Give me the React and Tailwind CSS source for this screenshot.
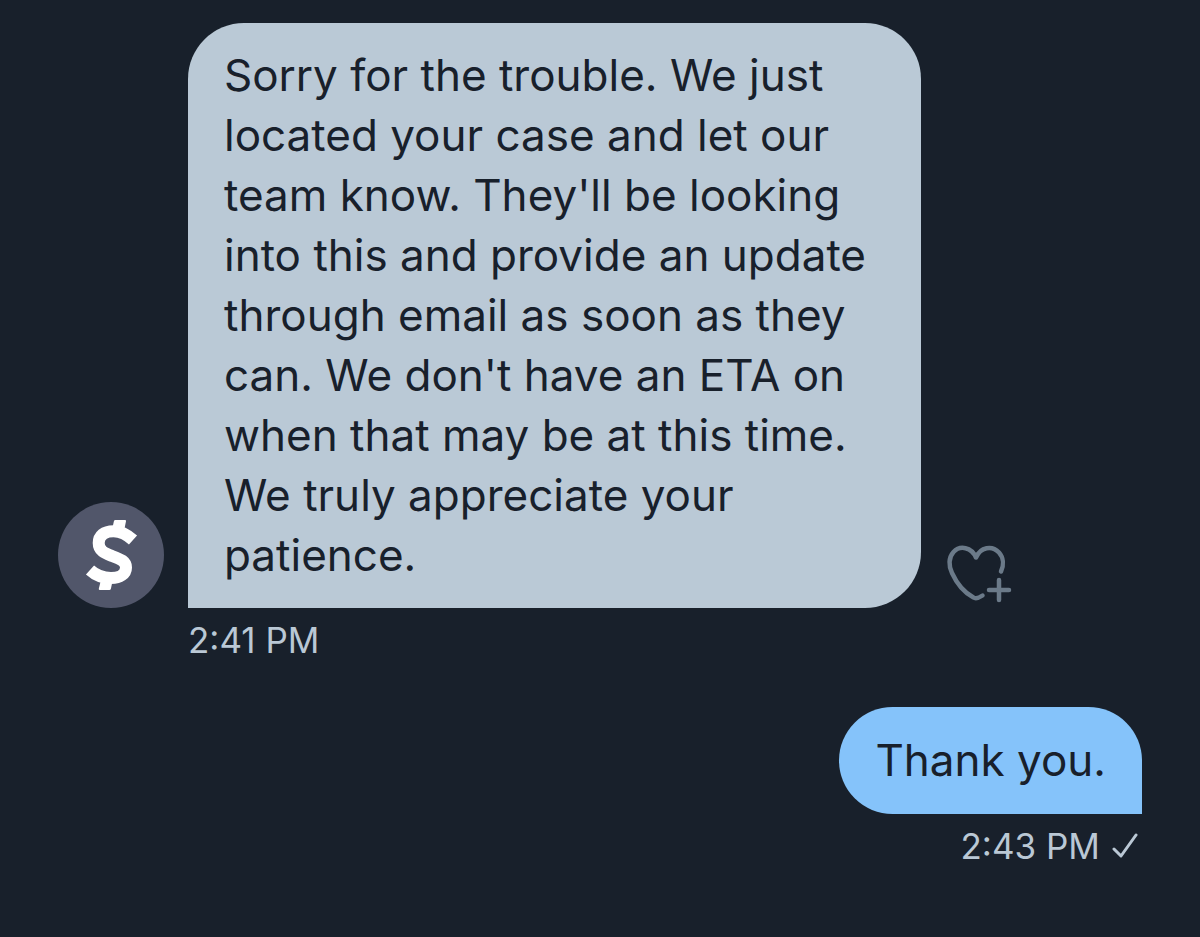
function CashAvatar() {
  return (
    <svg viewBox="0 0 106 106" className="size-[106px] shrink-0" role="img" aria-label="Cash support">
      <circle cx="53" cy="53" r="53" fill="#51566a" />
      <path
        d="M75 38C69 32.500 63 29.200 55.500 29.200C46 29.200 40.700 34 40.700 41C40.700 49 47 51.300 54 54C63 57.300 68 59.500 68 65.500C68 72 62 76 53 76C44.500 76 38 73.500 32 68"
        fill="none"
        stroke="#ffffff"
        strokeWidth="12"
        strokeLinejoin="round"
      />
      <path d="M57.300 18H67q1.300 0 1 1.300L65.800 30H53.500l2.400-10.700Q56.200 18 57.300 18zM43.200 77H55l-2.100 9.700q-.3 1.300-1.600 1.300H42q-1.500 0-1.200-1.300z" fill="#ffffff" />
    </svg>
  );
}

function HeartPlusIcon() {
  return (
    <svg viewBox="0 0 66 60" className="h-[60px] w-[66px]" fill="none" stroke="#6b7a89" strokeWidth="4.500" strokeLinecap="round" strokeLinejoin="round" aria-hidden="true">
      <path d="M55 27.500C58 21 57.500 13.500 53 8.500C46 1 34.500 3 30 13.500C25.500 3 14 1 7.500 8C2.500 13.500 2.500 22 6 29C11 40 19 49 27.500 53.500Q30.500 55.500 36.500 51.500" />
      <path d="M53 36v20M43 46h20" />
    </svg>
  );
}

function CheckIcon() {
  return (
    <svg viewBox="0 0 26 26" className="size-[26px]" fill="none" stroke="#bac8d5" strokeWidth="3" strokeLinecap="round" strokeLinejoin="round" role="img" aria-label="Sent">
      <path d="M2 16l7 7L24 2" />
    </svg>
  );
}

export default function App() {
  return (
    <main className="flex min-h-screen flex-col gap-[43px] bg-[#18202b] px-[58px] pt-[23px] font-['Inter','Liberation_Sans',sans-serif] text-[#18202b]">
      <article>
        <div className="flex items-end">
          <CashAvatar />
          <p className="ml-6 w-[733px] rounded-[56px] rounded-bl-none bg-[#bac9d6] pt-[22px] pr-4 pb-[23px] pl-9 text-[44px] leading-[60px]">
            Sorry for the trouble. We just located your case and let our team know. They'll be looking into this and provide an update through email as soon as they can. We don't have an ETA on when that may be at this time. We truly appreciate your patience.
          </p>
          <button type="button" aria-label="Add reaction" className="mb-1 ml-[25px]">
            <HeartPlusIcon />
          </button>
        </div>
        <time className="ml-[130px] block pt-2 text-[35px] leading-[48px] text-[#bac8d5]">2:41 PM</time>
      </article>
      <article className="flex flex-col items-end">
        <p className="rounded-[54px] rounded-br-none bg-[#85c3fa] px-9 pt-[23px] pb-6 text-[44px] leading-[60px]">Thank you.</p>
        <div className="flex items-center gap-3 pt-2 pr-1 text-[35px] leading-[48px] text-[#bac8d5]">
          <time>2:43 PM</time>
          <CheckIcon />
        </div>
      </article>
    </main>
  );
}
